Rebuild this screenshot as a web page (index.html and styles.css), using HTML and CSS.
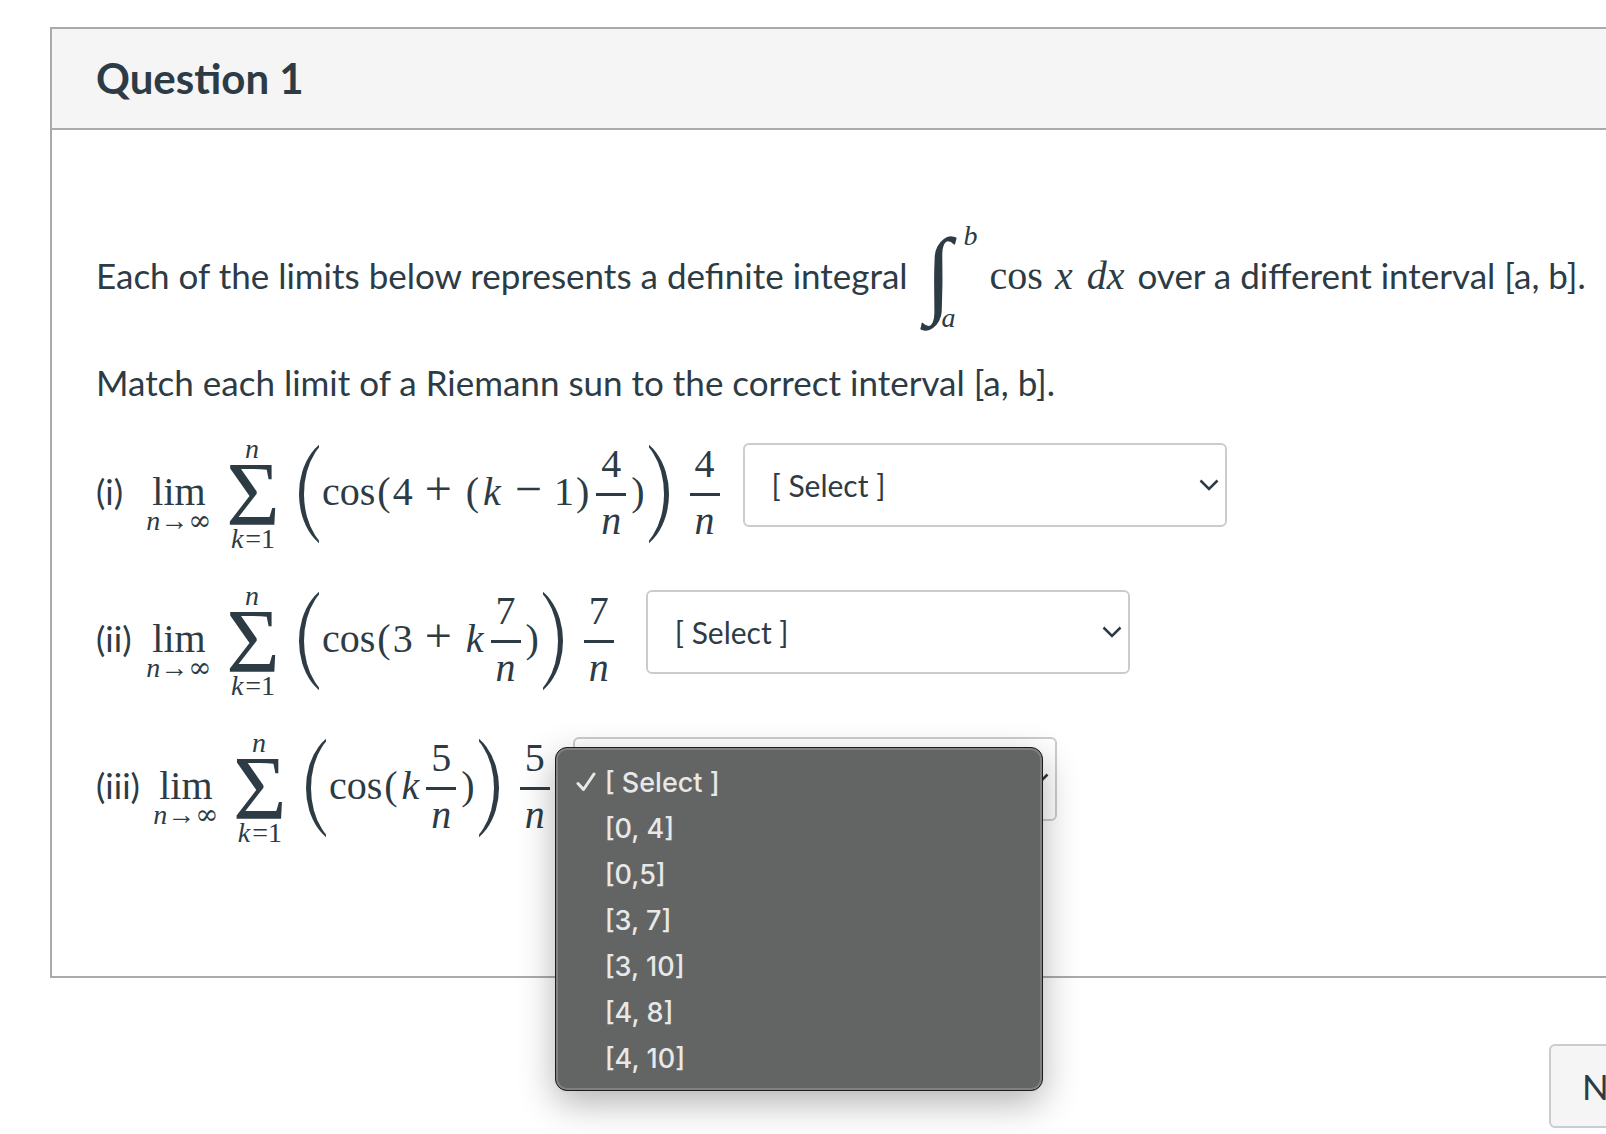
FILE: index.html
```html
<!DOCTYPE html>
<html lang="en">
<head>
  <meta charset="UTF-8" />
  <meta name="viewport" content="width=device-width, initial-scale=1.0"/>
  <title>Question 1</title>
  <link rel="stylesheet" href="styles.css">
</head>
<body>
  <div class="page">
    <div class="question">
      <div class="question-header">
        <h1>Question 1</h1>
      </div>

      <div class="question-text">
        <p class="intro">
          <span class="words">Each of the limits below represents a definite integral</span>
          <span class="integral">
            <i class="int-sign">∫</i>
            <span class="bounds"><i>b</i><i>a</i></span>
          </span>
          <span class="math">cos <i>x</i> <i>dx</i></span>
          <span class="words">over a different interval [a, b].</span>
        </p>
        <p class="instructions">Match each limit of a Riemann sun to the correct interval [a, b].</p>

        <!-- (i) -->
        <div class="row">
          <label class="number" for="limit1">(i)</label>
          <span class="lim"><span>lim</span><small><i>n</i>→<span class="inf">∞</span></small></span>
          <span class="sum"><small><i>n</i></small><b>Σ</b><small><i>k</i>=1</small></span>
          <span class="big-paren open"></span>
          <span class="math">cos<span class="par">(</span>4<span class="op">+</span><span class="par">(</span><i>k</i><span class="op">−</span>1<span class="par">)</span></span>
          <span class="frac"><span>4</span><i>n</i></span>
          <span class="math"><span class="par">)</span></span>
          <span class="big-paren close"></span>
          <span class="frac outer"><span>4</span><i>n</i></span>
          <div class="dropdown">
            <select id="limit1">
              <option>[ Select ]</option>
              <option>[0, 4]</option>
              <option>[0,5]</option>
              <option>[3, 7]</option>
              <option>[3, 10]</option>
              <option>[4, 8]</option>
              <option>[4, 10]</option>
            </select>
            <svg class="chevron" viewBox="0 0 20 12"><path d="M1.500 1.500 10 10 18.500 1.500"/></svg>
          </div>
        </div>

        <!-- (ii) -->
        <div class="row">
          <label class="number" for="limit2">(ii)</label>
          <span class="lim"><span>lim</span><small><i>n</i>→<span class="inf">∞</span></small></span>
          <span class="sum"><small><i>n</i></small><b>Σ</b><small><i>k</i>=1</small></span>
          <span class="big-paren open"></span>
          <span class="math">cos<span class="par">(</span>3<span class="op">+</span><i>k</i></span>
          <span class="frac"><span>7</span><i>n</i></span>
          <span class="math"><span class="par">)</span></span>
          <span class="big-paren close"></span>
          <span class="frac outer"><span>7</span><i>n</i></span>
          <span>&nbsp;</span>
          <div class="dropdown">
            <select id="limit2">
              <option>[ Select ]</option>
              <option>[0, 4]</option>
              <option>[0,5]</option>
              <option>[3, 7]</option>
              <option>[3, 10]</option>
              <option>[4, 8]</option>
              <option>[4, 10]</option>
            </select>
            <svg class="chevron" viewBox="0 0 20 12"><path d="M1.500 1.500 10 10 18.500 1.500"/></svg>
          </div>
        </div>

        <!-- (iii), menu open -->
        <div class="row">
          <label class="number" for="limit3">(iii)</label>
          <span class="lim"><span>lim</span><small><i>n</i>→<span class="inf">∞</span></small></span>
          <span class="sum"><small><i>n</i></small><b>Σ</b><small><i>k</i>=1</small></span>
          <span class="big-paren open"></span>
          <span class="math">cos<span class="par">(</span><i>k</i></span>
          <span class="frac"><span>5</span><i>n</i></span>
          <span class="math"><span class="par">)</span></span>
          <span class="big-paren close"></span>
          <span class="frac outer"><span>5</span><i>n</i></span>
          <div class="dropdown">
            <select id="limit3">
              <option></option>
            </select>
            <svg class="chevron" viewBox="0 0 20 12"><path d="M1.500 1.500 10 10 18.500 1.500"/></svg>
            <ul class="menu" role="listbox">
              <li role="option" aria-selected="true"><svg class="check" viewBox="0 0 20 20"><path d="M2 11.500 7.500 17.500 18 2"/></svg>[ Select ]</li>
              <li role="option">[0, 4]</li>
              <li role="option">[0,5]</li>
              <li role="option">[3, 7]</li>
              <li role="option">[3, 10]</li>
              <li role="option">[4, 8]</li>
              <li role="option">[4, 10]</li>
            </ul>
          </div>
        </div>
      </div>
    </div>

    <div class="footer">
      <button class="next-button">Next</button>
    </div>
  </div>
</body>
</html>
```
FILE: styles.css
```css
* { box-sizing: border-box; }
body {
  margin: 0;
  min-height: 100vh;
  overflow: hidden;
  font-family: Lato, sans-serif;
  font-size: 35px;
  line-height: 54px;
  color: #2d3b45;
  background: #fff;
}
/* the quiz column runs past the right side of the window */
.page {
  margin: 27px -94px 0 50px;
}
.question {
  border: 2px solid #aaa;
}
.question-header {
  padding: 22px 44px 23px;
  background: #f5f5f5;
  border-bottom: 2px solid #aaa;
}
h1 {
  margin: 0;
  font-size: 42px;
  font-weight: bold;
  line-height: 54px;
}
.question-text {
  padding: 85px 44px 127px;
}
p { margin: 0; }
.intro {
  display: flex;
  align-items: center;
  height: 126px;
  white-space: nowrap;
}
.words { padding-bottom: 6px; }
.instructions {
  margin: 14px 0 24px;
}

/* math */
.math {
  font-family: "Liberation Serif", serif;
  font-size: 40px;
  padding-bottom: 4px;
  white-space: nowrap;
}
.math i { padding: 0 2px; }
.intro .math { margin-right: 11px; }
.par { padding: 0 2px; }
.op {
  padding: 0 12px;
  font-size: 48px;
  line-height: 40px;
}
.integral {
  display: flex;
  align-items: center;
  margin: 0 12px 0 18px;
}
.int-sign {
  width: 32px;
  padding-bottom: 10px;
  font-family: "Liberation Serif", serif;
  font-size: 96px;
  line-height: 94px;
}
.bounds {
  display: flex;
  flex-direction: column;
  justify-content: space-between;
  height: 116px;
  margin-left: -16px;
  padding-bottom: 2px;
  font-family: "Liberation Serif", serif;
  font-size: 28px;
  line-height: 32px;
}
.bounds i:first-child { padding-left: 22px; }
.row {
  display: flex;
  align-items: center;
  margin-bottom: 25px;
}
.row:last-child { margin-bottom: 0; }
.number {
  min-width: 45px;
  padding: 0 8px 6px 0;
}
small {
  font-size: 28px;
}
.lim {
  display: flex;
  flex-direction: column;
  align-items: center;
  width: 76px;
  padding-top: 19px;
  font-family: "Liberation Serif", serif;
  font-size: 40px;
  line-height: 34px;
}
.lim small { line-height: 24px; }
.inf { font-family: "DejaVu Serif", serif; }
.sum {
  display: flex;
  flex-direction: column;
  align-items: center;
  width: 56px;
  margin: 0 18px 0 8px;
  font-family: "Liberation Serif", serif;
}
.sum b {
  font-size: 92px;
  font-weight: normal;
  line-height: 58px;
}
.sum small { line-height: 32px; }
.sum i { padding-right: 2px; }

/* tall brackets: the side of an ellipse, cut off at both ends */
.big-paren {
  display: flex;
  align-items: center;
  width: 20px;
  height: 100px;
  overflow: hidden;
}
.big-paren::before {
  content: "";
  flex: none;
  width: 80px;
  height: 116px;
  border-radius: 50%;
}
.open { margin-right: 3px; }
.open::before { border-left: 5px solid; }
.close {
  justify-content: flex-end;
  margin-left: 2px;
}
.close::before { border-right: 5px solid; }
.frac {
  display: flex;
  flex-direction: column;
  width: 30px;
  margin: 0 3px 0 5px;
  font-family: "Liberation Serif", serif;
  font-size: 40px;
  line-height: 50px;
  text-align: center;
}
.frac > * { padding-bottom: 4px; }
.frac i { border-top: 3px solid; }
.frac.outer { margin: 0 23px 0 21px; }

/* dropdowns */
.dropdown {
  position: relative;
  margin-bottom: 18px;
}
select {
  display: block;
  appearance: none;
  width: 484px;
  height: 84px;
  padding: 0 27px;
  font-family: Lato, sans-serif;
  font-size: 30px;
  color: #2d3b45;
  background: #fff;
  border: 2px solid #ccc;
  border-radius: 6px;
}
.chevron {
  position: absolute;
  top: 36px;
  right: 8px;
  width: 20px;
  height: 12px;
  fill: none;
  stroke: #2d3b45;
  stroke-width: 2.500;
}
.menu {
  position: absolute;
  top: 10px;
  left: -18px;
  width: 488px;
  margin: 0;
  padding: 12px 0 8px;
  list-style: none;
  font-family: Inter, sans-serif;
  font-size: 27px;
  font-weight: 500;
  line-height: 46px;
  color: #e8e8e8;
  background: #636564;
  border: 1px solid #1c1c1c;
  border-radius: 12px;
  box-shadow: inset 0 0 0 2px #808080, 0 12px 36px rgba(0,0,0,0.3);
}
.menu li {
  position: relative;
  padding-left: 49px;
}
.check {
  position: absolute;
  top: 12px;
  left: 20px;
  width: 20px;
  height: 20px;
  fill: none;
  stroke: #e8e8e8;
  stroke-width: 3;
  stroke-linecap: round;
  stroke-linejoin: round;
}

.footer {
  display: flex;
  justify-content: flex-end;
  margin-top: 66px;
}
.next-button {
  width: 151px;
  height: 84px;
  padding: 0 31px;
  font-family: Lato, sans-serif;
  font-size: 35px;
  text-align: left;
  color: #2d3b45;
  background: #f5f5f5;
  border: 2px solid #c7cdd1;
  border-radius: 6px;
}
```
